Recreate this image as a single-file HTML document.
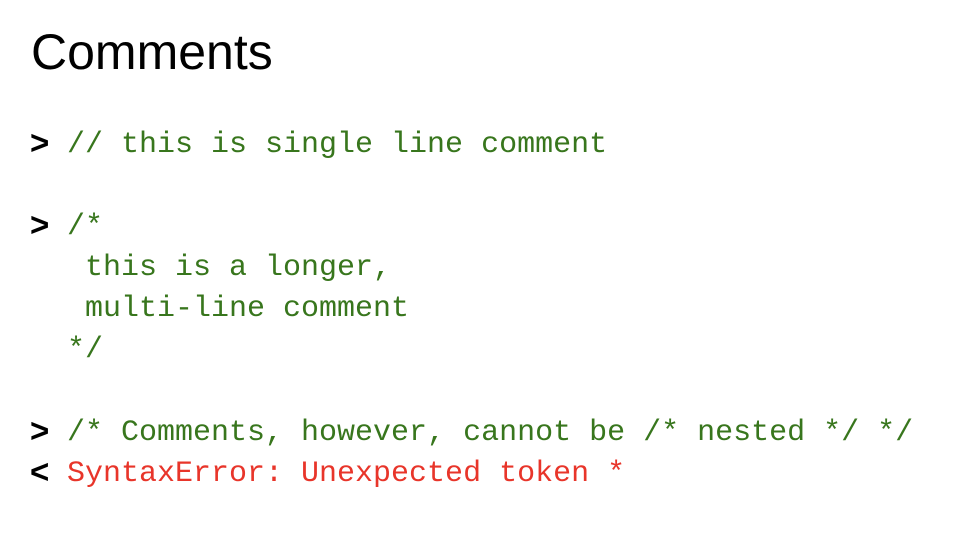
<!DOCTYPE html>
<html><head><meta charset="utf-8"><style>
body{margin:0;width:957px;height:543px;background:#fff;position:relative;overflow:hidden}
h1{position:absolute;left:31px;top:23px;margin:0;font:50px/58px "Liberation Sans",sans-serif;color:#000}
.l{position:absolute;left:0;height:41px;font:30px/41px "Liberation Mono",monospace;white-space:pre}
.p{position:absolute;left:30px;top:-3px;font:bold 33px/41px "Liberation Sans",sans-serif;color:#000}
.g{position:absolute;left:67px;color:#38761d}
.r{position:absolute;left:67px;color:#e8352a}
</style></head><body>
<h1>Comments</h1>
<div class="l" style="top:125px"><span class="p">&gt;</span><span class="g">// this is single line comment</span></div>
<div class="l" style="top:207px"><span class="p">&gt;</span><span class="g">/*</span></div>
<div class="l" style="top:248px"><span class="g"> this is a longer,</span></div>
<div class="l" style="top:289px"><span class="g"> multi-line comment</span></div>
<div class="l" style="top:330px"><span class="g">*/</span></div>
<div class="l" style="top:413px"><span class="p">&gt;</span><span class="g">/* Comments, however, cannot be /* nested */ */</span></div>
<div class="l" style="top:454px"><span class="p">&lt;</span><span class="r">SyntaxError: Unexpected token *</span></div>
</body></html>
